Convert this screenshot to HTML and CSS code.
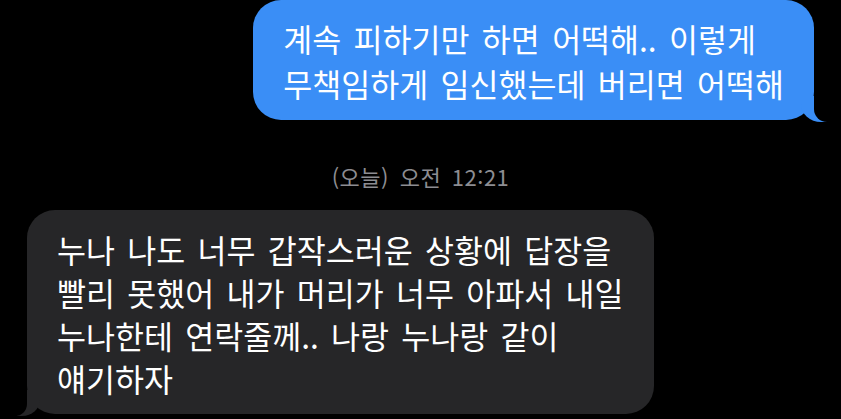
FILE: index.html
```html
<!DOCTYPE html>
<html lang="ko">
<head>
    <meta charset="UTF-8">
    <meta name="viewport" content="width=device-width, initial-scale=1.0">
    <link rel="stylesheet" href="styles.css">
</head>
<body>
    <div class="thread">
        <div class="bubble sent">
            계속 피하기만 하면 어떡해.. 이렇게<br>
            무책임하게 임신했는데 버리면 어떡해
        </div>

        <div class="timestamp">(오늘) 오전 12:21</div>

        <div class="bubble received">
            누나 나도 너무 갑작스러운 상황에 답장을<br>
            빨리 못했어 내가 머리가 너무 아파서 내일<br>
            누나한테 연락줄께.. 나랑 누나랑 같이<br>
            얘기하자
        </div>
    </div>
</body>
</html>
```

FILE: styles.css
```css
body {
    margin: 0;
    background: #000;
    font-family: "Noto Sans CJK KR", "Noto Sans", sans-serif;
    color: #fff;
    overflow: hidden;
}

.thread {
    display: flex;
    flex-direction: column;
    height: 419px;
}

.bubble {
    position: relative;
    font-size: 31.5px;
    word-spacing: 3.5px;
    border-radius: 28px;
    white-space: nowrap;
}

.sent {
    align-self: flex-end;
    margin-right: 27px;
    background: #3a8ef6;
    padding: 16px 30px 14px 30px;
    line-height: 45px;
}

/* tail bottom right */
.sent::before {
    content: "";
    position: absolute;
    right: -14px;
    bottom: -2px;
    width: 27px;
    height: 26px;
    background: #3a8ef6;
    border-bottom-left-radius: 20px 18px;
}

.sent::after {
    content: "";
    position: absolute;
    right: -32px;
    bottom: -2px;
    width: 32px;
    height: 28px;
    background: #000;
    border-bottom-left-radius: 13px;
}

.timestamp {
    align-self: center;
    margin-top: 42px;
    font-size: 22px;
    letter-spacing: 0.5px;
    word-spacing: 4px;
    color: #8d8d92;
    line-height: 28px;
}

.received {
    align-self: flex-start;
    margin-left: 27px;
    margin-top: 20px;
    background: #262628;
    padding: 18px 30px 14px 30px;
    line-height: 43px;
}

/* tail bottom left */
.received::before {
    content: "";
    position: absolute;
    left: -10px;
    bottom: -2px;
    width: 23px;
    height: 26px;
    background: #262628;
    border-bottom-right-radius: 18px 16px;
}

.received::after {
    content: "";
    position: absolute;
    left: -29px;
    bottom: -2px;
    width: 29px;
    height: 28px;
    background: #000;
    border-bottom-right-radius: 12px;
}
```
